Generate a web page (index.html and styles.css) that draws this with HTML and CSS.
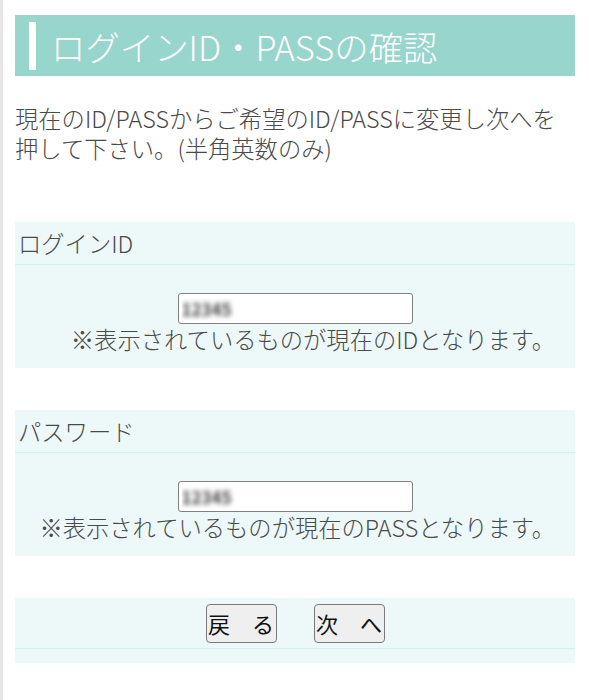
FILE: index.html
```html
<!DOCTYPE html>
<html lang="ja">
<head>
<meta charset="utf-8">
<title>ログインID・PASSの確認</title>
<link rel="stylesheet" href="styles.css">
</head>
<body>
<div class="page">
  <h1 class="title"><span class="title-bar"></span>ログインID・PASSの確認</h1>
  <p class="lead">現在のID/PASSからご希望のID/PASSに変更し次へを押して下さい。(半角英数のみ)</p>

  <section class="box">
    <div class="box-head">ログインID</div>
    <div class="box-body">
      <input class="field" type="text" value="12345" readonly>
      <div class="note">※表示されているものが現在のIDとなります。</div>
    </div>
  </section>

  <section class="box">
    <div class="box-head">パスワード</div>
    <div class="box-body">
      <input class="field" type="text" value="12345" readonly>
      <div class="note">※表示されているものが現在のPASSとなります。</div>
    </div>
  </section>

  <section class="box actions">
    <div class="action-row">
      <button class="btn" type="button">戻　る</button>
      <button class="btn" type="button">次　へ</button>
    </div>
    <div class="action-foot"></div>
  </section>
</div>
</body>
</html>
```

FILE: styles.css
```css
html, body {
  margin: 0;
  padding: 0;
  background: #ffffff;
}
body {
  font-family: "Noto Sans CJK JP", "Noto Sans", sans-serif;
  font-weight: 300;
  color: #4a4a4a;
  border-left: 3px solid #e6e6e6;
  min-height: 700px;
  box-sizing: border-box;
}
.page {
  padding: 15px 14px 0 12px;
}
.title {
  margin: 0;
  height: 61px;
  display: flex;
  align-items: center;
  background: #97d5cd;
  color: #ffffff;
  font-size: 34.4px;
  font-weight: 300;
  padding-left: 14px;
  letter-spacing: 0;
}
.title-bar {
  display: block;
  width: 7px;
  height: 48px;
  background: #ffffff;
  margin-right: 15px;
}
.lead {
  margin: 27px 0 0 0;
  font-size: 23.3px;
  line-height: 30px;
}
.box {
  margin-top: 59px;
  background: #edf9f9;
}
.box + .box {
  margin-top: 42px;
}
.box-head {
  height: 42px;
  line-height: 42px;
  font-size: 23.3px;
  padding-left: 3px;
  border-bottom: 1px solid #d3f0f0;
}
.box-body {
  padding: 28px 0 13px 0;
  display: flex;
  flex-direction: column;
  align-items: center;
}
.field {
  box-sizing: border-box;
  width: 235px;
  height: 31px;
  border: 1.5px solid #808080;
  border-radius: 3px;
  background: #ffffff;
  padding: 0 3px;
  font-family: "Noto Sans CJK JP", sans-serif;
  font-size: 17px;
  font-weight: bold;
  color: transparent;
  text-shadow: 0 0 5px #444444;
  outline: none;
}
.note {
  align-self: stretch;
  text-align: right;
  padding-right: 20px;
  font-size: 23.3px;
  line-height: 31px;
}
.action-row {
  border-bottom: 1px solid #d3f0f0;
  display: flex;
  justify-content: center;
  align-items: flex-start;
  gap: 37px;
  padding-top: 6px;
  box-sizing: border-box;
  height: 51px;
}
.action-foot {
  height: 14px;
}
.btn {
  box-sizing: border-box;
  width: 71px;
  height: 39px;
  padding: 0;
  border: 1.5px solid #7a7a7a;
  border-radius: 4px;
  background: #efefef;
  color: #111111;
  font-family: "Noto Sans CJK JP", sans-serif;
  font-weight: normal;
  font-size: 22px;
  line-height: 35px;
}
```
